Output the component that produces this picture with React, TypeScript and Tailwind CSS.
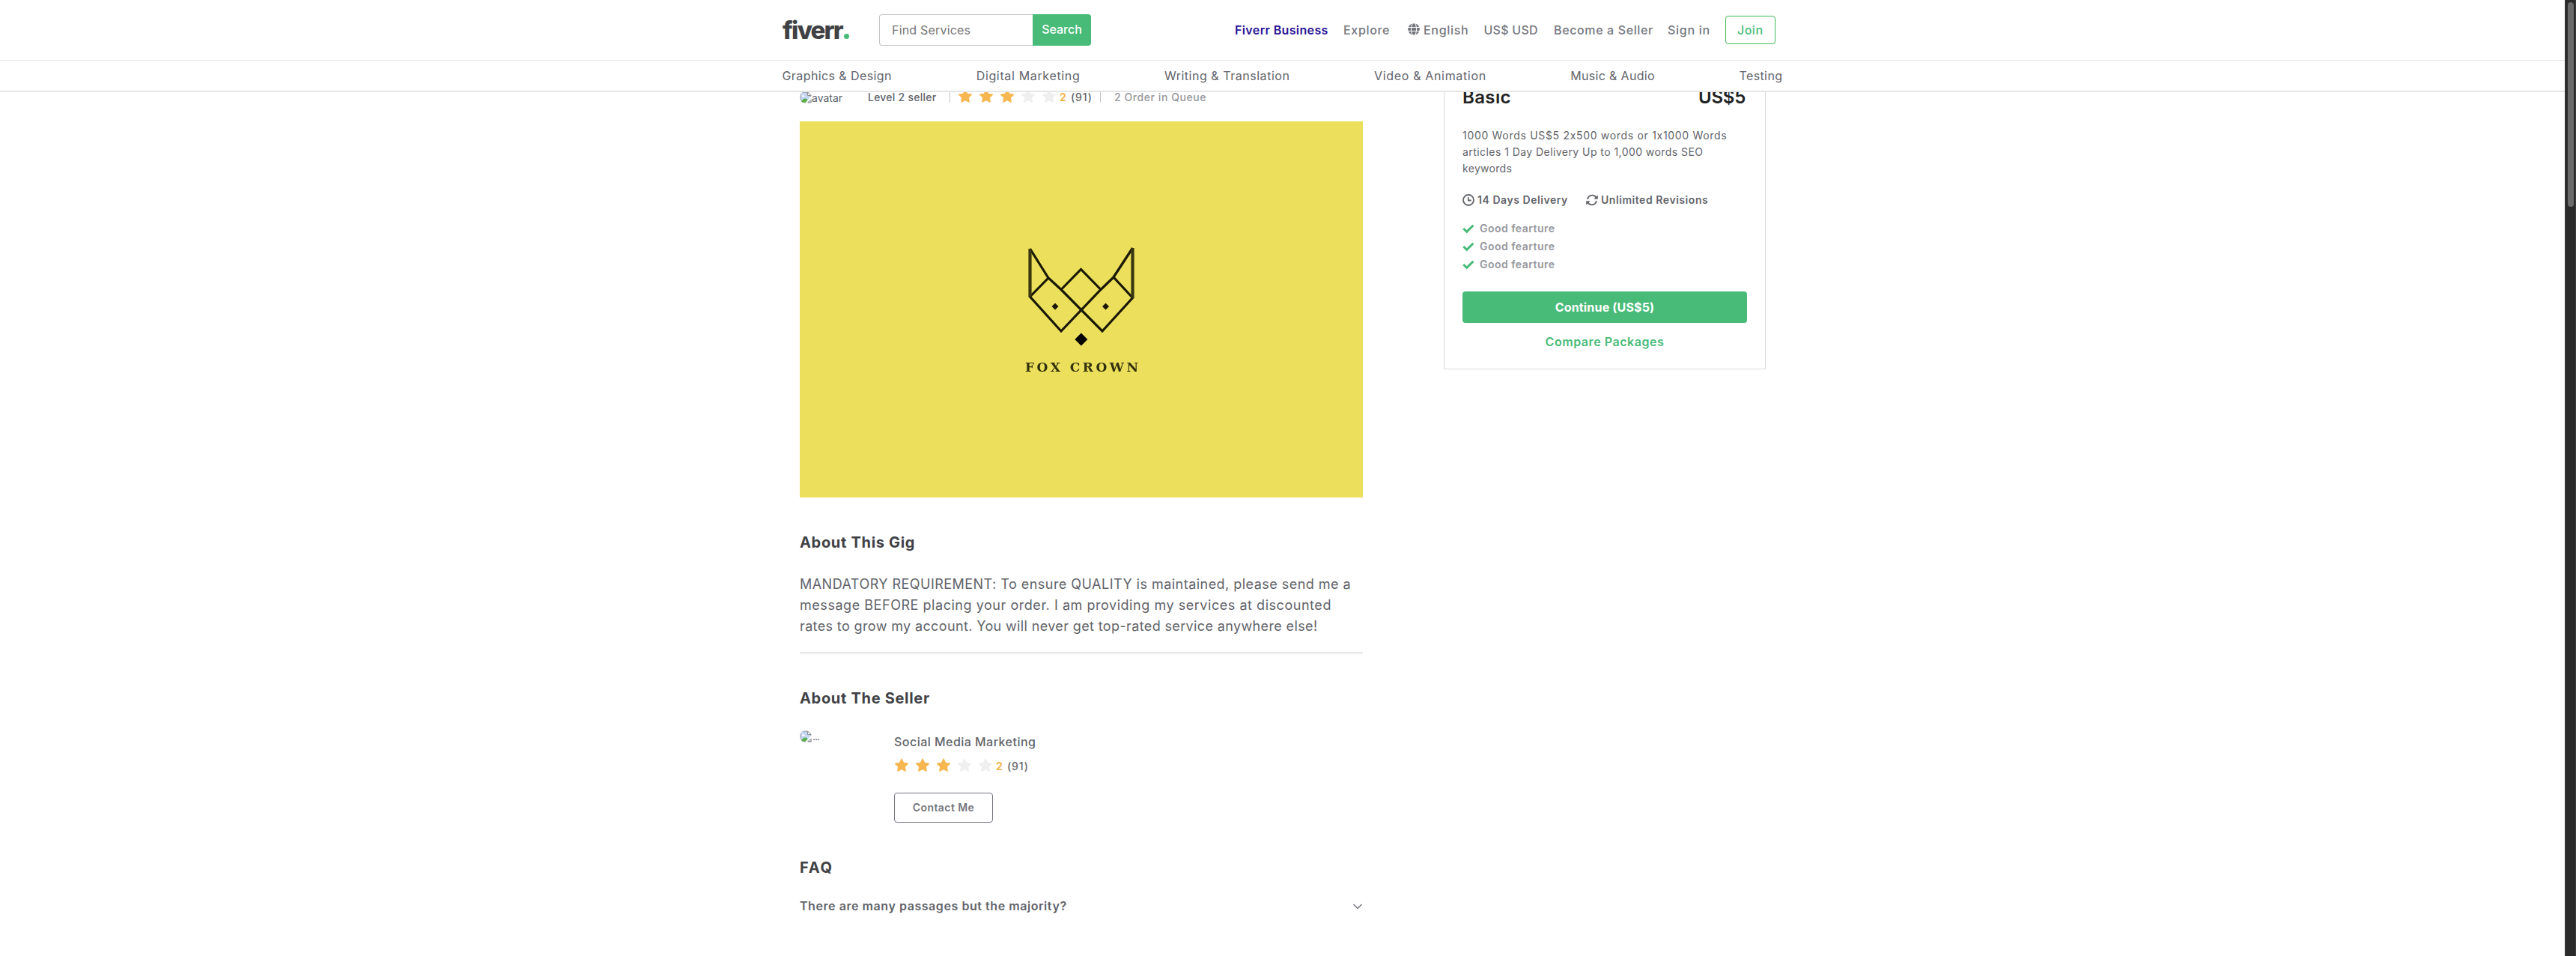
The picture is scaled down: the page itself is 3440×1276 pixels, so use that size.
import { AiFillStar } from "react-icons/ai";
import { FaGlobe } from "react-icons/fa";

const categories = [
  { label: "Graphics & Design", cls: "w-[147px] tracking-[0.41px]" },
  { label: "Digital Marketing", cls: "w-[139px] tracking-[0.65px]" },
  { label: "Writing & Translation", cls: "w-[168px] tracking-[0.53px]" },
  { label: "Video & Animation", cls: "w-[150px] tracking-[0.66px]" },
  { label: "Music & Audio", cls: "w-[113px] tracking-[0.33px]" },
  { label: "Testing", cls: "w-[58px] tracking-[0.4px]" },
];

function Logo() {
  return (
    <a className="flex w-[130px] items-baseline pl-px text-[33px] leading-[40px] font-extrabold text-[#404145]">
      <span className="w-[82px] tracking-[-1.8px]">fiverr</span>
      <span className="size-[7px] rounded-full bg-[#48bb78]" />
    </a>
  );
}

function BrokenImage({ round }: { round: string }) {
  return (
    <svg viewBox="0 0 16 16" className={`size-4 shrink-0 ${round}`}>
      <path d="M1 1h9.5L15 5.500V15H1z" fill="#c5d5f4" stroke="#8a8a8a" />
      <path d="M10.500 1v4.500H15z" fill="#fff" stroke="#8a8a8a" />
      <path d="M3 6.200c0-1.400 2-1.600 2.400-.6 1-.3 1.800.8 1 1.400H3z" fill="#fff" />
      <path d="M1.500 14.500C3 10.500 6 9 8 9.500s3 2 3.500 5z" fill="#5cae49" />
      <path d="M16 5.500L8.500 14l-1 2h3L16 10z" fill="#fff" />
      <path d="M10.500 14.500H15V11z" fill="#c5d5f4" stroke="#8a8a8a" strokeWidth=".7" />
    </svg>
  );
}

function Rating() {
  return (
    <div className="flex items-center">
      <div className="-mt-[3px] -ml-px flex gap-1.5">
        {[1, 2, 3, 4, 5].map((n) => (
          <AiFillStar key={n} size={22} className={n <= 3 ? "text-[#f7b750]" : "text-[#efefef]"} />
        ))}
      </div>
      <span className="ml-[3px] w-[15px] font-bold text-[#f7b750]">2</span>
      <span className="w-[29px] tracking-[0.93px]">(91)</span>
    </div>
  );
}

function FoxCrown() {
  return (
    <svg viewBox="0 0 210 200" className="mt-[148px] ml-[272px] h-[200px] w-[210px] blur-[0.5px]">
      <g fill="none" stroke="#1a1806" strokeWidth="3.2">
        <path d="M35.500 22L60 61l17 15.500 55 55.500 40.500-44.500L147 60 130 76.500 77 132 35.500 86 60 61" />
        <path d="M77 76.500l26.500-27 26.500 27M147 60l25.500-39" />
      </g>
      <path d="M35.500 22v64M172.500 21v66.500" stroke="#3a370f" strokeWidth="4.2" />
      <path d="M69 94.500l4.500 4.500-4.500 4.500-4.500-4.500zM136.500 94.500l4.500 4.500-4.500 4.500-4.500-4.500z" fill="#1a1806" />
      <path d="M103.800 134.500l8.500 8.500-8.500 8.500-8.500-8.500z" fill="#050500" />
      <text x="29" y="186" textLength="151" fontSize="17" fontWeight="700" fill="#33300d" className="font-['DejaVu_Serif']">
        FOX CROWN
      </text>
    </svg>
  );
}

function Clock() {
  return (
    <svg viewBox="0 0 16 16" className="size-4" fill="none" stroke="#62646a" strokeWidth="1.800">
      <circle cx="8" cy="8" r="7" />
      <path d="M7.800 4.200v4.300h4" />
    </svg>
  );
}

function Refresh() {
  return (
    <svg viewBox="0 0 16 16" className="size-4" fill="#62646a">
      <g fill="none" stroke="#62646a" strokeWidth="1.900">
        <path d="M2 6.800A6.200 6.200 0 0 1 13.300 4.500" />
        <path d="M14 9.200A6.200 6.200 0 0 1 2.700 11.500" />
      </g>
      <path d="M15.800 1.300v5.400h-5.400zM.2 14.700V9.300h5.400z" />
    </svg>
  );
}

function Check() {
  return (
    <svg viewBox="0 0 16 16" className="size-4" fill="none" stroke="#48bb78" strokeWidth="3">
      <path d="M1.300 8l4.400 4.300 8.700-8.600" />
    </svg>
  );
}

function Header() {
  return (
    <header className="h-[123px] shrink-0 border-b-2 border-[#e4e5e7] bg-white text-base leading-6 whitespace-nowrap">
      <div className="mx-auto flex h-20 w-[1337px] items-center">
        <Logo />
        <div className="flex h-[42px] w-[283px]">
          <div className="w-[205px] rounded-l border border-r-0 border-[#c5c6c9] pt-2 pl-4 tracking-[0.19px] text-[#757575]">
            Find Services
          </div>
          <button className="flex-1 rounded-r bg-[#48bb78] pb-0.5 font-medium text-white">Search</button>
        </div>
        <nav className="mr-[10px] ml-auto flex items-center font-medium text-[#74767e]">
          <a className="w-[145px] font-semibold tracking-[0.37px] text-[#281395]">Fiverr Business</a>
          <a className="w-[86px] tracking-[0.68px]">Explore</a>
          <a className="flex w-[101.500px] items-center gap-[5px] tracking-[0.69px]">
            <FaGlobe size={16} className="-mt-0.5" />
            English
          </a>
          <a className="w-[93.500px] tracking-[0.25px]">US$ USD</a>
          <a className="w-[152px] tracking-[0.63px]">Become a Seller</a>
          <a className="w-[77px] tracking-[0.73px]">Sign in</a>
          <a className="flex h-[38px] w-[67px] items-center rounded border border-[#40b954] pl-[15px] tracking-[0.5px] text-[#48bb78]">
            Join
          </a>
        </nav>
      </div>
      <div className="border-t border-[#e4e5e7]">
        <nav className="mx-auto flex h-10 w-[1336px] items-center justify-between text-[#62646a]">
          {categories.map((c) => (
            <a key={c.label} className={c.cls}>
              {c.label}
            </a>
          ))}
        </nav>
      </div>
    </header>
  );
}

function Heading({ children, cls }: { children: string; cls: string }) {
  return <h2 className={`mt-[45px] text-[20px] leading-[30px] font-bold text-[#404145] ${cls}`}>{children}</h2>;
}

function Gig() {
  return (
    <section className="w-[752px]">
      <div className="-mt-[5px] flex h-6 items-center text-sm font-medium text-[#62646a]">
        <BrokenImage round="rounded-l-full" />
        <span className="w-[75px] pt-0.5 font-normal">avatar</span>
        <span className="w-[109px] tracking-[0.24px]">Level 2 seller</span>
        <span className="mr-[10px] h-[14px] w-px bg-[#c5c6c9]" />
        <Rating />
        <span className="mr-[18px] ml-[10px] h-[14px] w-px bg-[#c5c6c9]" />
        <span className="tracking-[0.57px] text-[#95979d]">2 Order in Queue</span>
      </div>
      <div className="mt-5 flex h-[502px] bg-[#ebdf5c]">
        <FoxCrown />
      </div>
      <Heading cls="tracking-[0.69px]">About This Gig</Heading>
      <p className="mt-[27px] text-lg leading-7 whitespace-nowrap text-[#62646a]">
        <span className="block tracking-[0.47px]">MANDATORY REQUIREMENT: To ensure QUALITY is maintained, please send me a</span>
        <span className="block tracking-[0.54px]">message BEFORE placing your order. I am providing my services at discounted</span>
        <span className="block tracking-[0.37px]">rates to grow my account. You will never get top-rated service anywhere else!</span>
      </p>
      <div className="mt-[21px] h-px bg-[#c5c6c9]" />
      <Heading cls="tracking-[0.69px]">About The Seller</Heading>
      <div className="mt-7 flex">
        <div className="flex h-4 w-[126px] text-sm leading-4 text-[#62646a]">
          <BrokenImage round="rounded-l-full" />
          <span className="pl-px tracking-[-1px]">...</span>
        </div>
        <div className="pt-[3px]">
          <div className="text-base leading-6 font-medium tracking-[0.47px] text-[#62646a]">Social Media Marketing</div>
          <div className="mt-[9px] flex h-6 items-center text-sm font-medium text-[#62646a]">
            <Rating />
          </div>
          <button className="mt-[23px] h-10 w-[132px] rounded border border-[#74767e] text-sm font-semibold tracking-[0.41px] text-[#74767e]">
            Contact Me
          </button>
        </div>
      </div>
      <Heading cls="tracking-[1.8px]">FAQ</Heading>
      <div className="mt-6 flex items-center justify-between pr-px text-base leading-6 font-semibold text-[#62646a]">
        <span className="tracking-[0.56px]">There are many passages but the majority?</span>
        <svg viewBox="0 0 12 8" className="mt-0.5 h-2 w-3" fill="none" stroke="#74767e" strokeWidth="1.500">
          <path d="M.5 1L6 6.500 11.500 1" />
        </svg>
      </div>
    </section>
  );
}

function PackageCard() {
  return (
    <aside className="-mt-px h-[371px] w-[430px] border border-[#dadbdd] px-6 text-sm text-[#62646a]">
      <div className="-mt-[9px] flex justify-between text-2xl font-semibold text-[#222325]">
        <span className="tracking-[0.37px]">Basic</span>
        <span className="w-[65px] tracking-[-0.2px]">US$5</span>
      </div>
      <p className="mt-6 leading-[22px] whitespace-nowrap">
        <span className="block tracking-[0.69px] [font-feature-settings:'calt'_0]">1000 Words US$5 2x500 words or 1x1000 Words</span>
        <span className="block tracking-[0.44px]">articles 1 Day Delivery Up to 1,000 words SEO</span>
        <span className="block tracking-[0.31px]">keywords</span>
      </p>
      <div className="mt-[19px] flex h-6 items-center font-semibold tracking-[0.55px]">
        <Clock />
        <span className="w-[149px] pl-1">14 Days Delivery</span>
        <Refresh />
        <span className="pl-1">Unlimited Revisions</span>
      </div>
      <ul className="mt-[14px] font-semibold tracking-[0.48px] text-[#95979d]">
        {[1, 2, 3].map((n) => (
          <li key={n} className="flex h-6 items-center gap-[7px]">
            <Check />
            Good fearture
          </li>
        ))}
      </ul>
      <button className="mt-[24px] h-[42px] w-full rounded bg-[#48bb78] text-base font-bold tracking-[0.17px] text-white">
        Continue (US$5)
      </button>
      <div className="mt-[13px] text-center text-base leading-6 font-semibold tracking-[0.55px] text-[#48bb78]">Compare Packages</div>
    </aside>
  );
}

export default function App() {
  return (
    <div className="flex h-[1276px] w-[3440px] overflow-hidden bg-white font-['Inter',sans-serif]">
      <div className="flex w-[3425px] flex-col">
        <Header />
        <main className="min-h-0 flex-1 overflow-hidden">
          <div className="ml-[1068px] flex w-[1290px] items-start justify-between">
            <Gig />
            <PackageCard />
          </div>
        </main>
      </div>
      <div className="w-[15px] border-x border-[#3c3c3c] bg-[#2b2b2b] pt-[3px] pl-[3px]">
        <div className="h-[273px] w-2 rounded-full bg-[#6b6b6b]" />
      </div>
    </div>
  );
}
